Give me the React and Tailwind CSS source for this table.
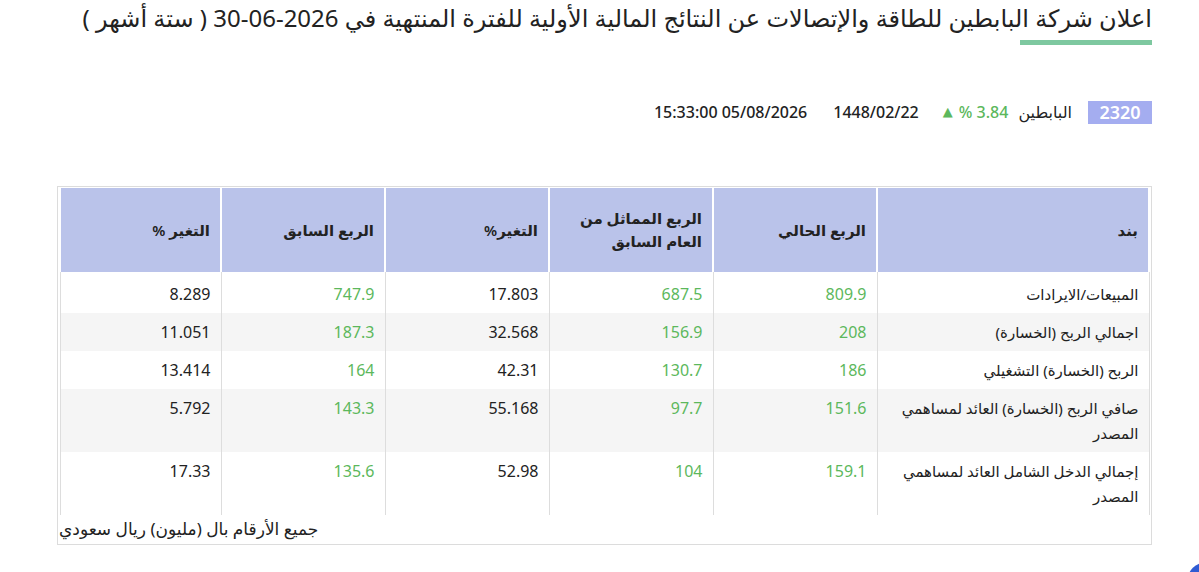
import React from "react";

const rows = [
  { label: "المبيعات/الايرادات", cur: "809.9", same: "687.5", ch1: "17.803", prev: "747.9", ch2: "8.289" },
  { label: "اجمالي الربح (الخسارة)", cur: "208", same: "156.9", ch1: "32.568", prev: "187.3", ch2: "11.051" },
  { label: "الربح (الخسارة) التشغيلي", cur: "186", same: "130.7", ch1: "42.31", prev: "164", ch2: "13.414" },
  { label: "صافي الربح (الخسارة) العائد لمساهمي المصدر", cur: "151.6", same: "97.7", ch1: "55.168", prev: "143.3", ch2: "5.792" },
  { label: "إجمالي الدخل الشامل العائد لمساهمي المصدر", cur: "159.1", same: "104", ch1: "52.98", prev: "135.6", ch2: "17.33" },
];

const headers = ["بند", "الربع الحالي", "الربع المماثل من العام السابق", "التغير%", "الربع السابق", "التغير %"];

export default function App() {
  return (
    <div
      dir="rtl"
      className="relative h-[572px] w-[1199px] overflow-hidden bg-white text-[#222]"
      style={{ fontFamily: '"Noto Sans", "DejaVu Sans", sans-serif' }}
    >
      <div className="mr-[47px] ml-[57px] flex flex-col">
        {/* title */}
        <div className="flex flex-col items-start">
          <h1 className="mt-[1px] whitespace-nowrap text-[24px] leading-[34px] font-normal text-[#222]">
            اعلان شركة البابطين للطاقة والإتصالات عن النتائج المالية الأولية للفترة المنتهية في 2026-06-30 ( ستة أشهر )
          </h1>
          <div className="mt-[5px] h-[5px] w-[132px] bg-[#7ec8a0]" />
        </div>

        {/* info row */}
        <div className="mt-[55px] flex items-center text-[16px] font-medium">
          <span className="flex h-[23px] w-[64px] items-center justify-center bg-[#a4adf0] text-[18px] font-semibold text-white">
            2320
          </span>
          <span className="mr-[16px]">البابطين</span>
          <span dir="ltr" className="mr-[10px] flex items-center gap-[6px] text-[#5cb85c]">
            <span className="text-[13px]">▲</span>
            <span>% 3.84</span>
          </span>
          <span className="mr-[24px]">1448/02/22</span>
          <span dir="ltr" className="mr-[26px]">15:33:00 05/08/2026</span>
        </div>

        {/* table box */}
        <div className="mt-[62px] border border-[#dcdcdc] px-px pt-px">
          <table className="w-full table-fixed border-collapse text-[15px]">
            <colgroup>
              <col className="w-[272px]" />
              <col className="w-[164px]" />
              <col className="w-[164px]" />
              <col className="w-[164px]" />
              <col className="w-[164px]" />
              <col />
            </colgroup>
            <thead>
              <tr className="h-[84px] bg-[#bac3ea]">
                {headers.map((h, i) => (
                  <th
                    key={i}
                    className="border-x-2 border-white px-[10px] text-right align-middle text-[15px] leading-[23px] font-semibold"
                  >
                    {i === 2 ? (
                      <>
                        الربع المماثل من
                        <br />
                        العام السابق
                      </>
                    ) : (
                      h
                    )}
                  </th>
                ))}
              </tr>
            </thead>
            <tbody>
              {rows.map((r, i) => {
                const pad = i === 0 ? "pt-[10px]" : "pt-[7px]";
                return (
                  <tr key={i} className={i % 2 === 1 ? "bg-[#f5f5f5]" : "bg-white"}>
                    <td className={`border-x border-[#dddddd] px-[10px] pb-[6px] align-top leading-[25px] ${pad}`}>
                      {r.label}
                    </td>
                    <td className={`border-x border-[#dddddd] px-[10px] pb-[6px] text-right align-top text-[16px] leading-[25px] text-[#5cb85c] ${pad}`}>
                      {r.cur}
                    </td>
                    <td className={`border-x border-[#dddddd] px-[10px] pb-[6px] text-right align-top text-[16px] leading-[25px] text-[#5cb85c] ${pad}`}>
                      {r.same}
                    </td>
                    <td className={`border-x border-[#dddddd] px-[10px] pb-[6px] text-right align-top text-[16px] leading-[25px] ${pad}`}>
                      {r.ch1}
                    </td>
                    <td className={`border-x border-[#dddddd] px-[10px] pb-[6px] text-right align-top text-[16px] leading-[25px] text-[#5cb85c] ${pad}`}>
                      {r.prev}
                    </td>
                    <td className={`border-x border-[#dddddd] px-[10px] pb-[6px] text-right align-top text-[16px] leading-[25px] ${pad}`}>
                      {r.ch2}
                    </td>
                  </tr>
                );
              })}
            </tbody>
          </table>
          <div className="pb-[2px] text-left text-[17px] leading-[27px]">جميع الأرقام بال (مليون) ريال سعودي</div>
        </div>
      </div>

      {/* scroll-to-top bubble */}
      <div className="absolute -bottom-[30px] -right-[28px] h-[40px] w-[40px] rounded-full bg-[#2f5bd3]" />
    </div>
  );
}
